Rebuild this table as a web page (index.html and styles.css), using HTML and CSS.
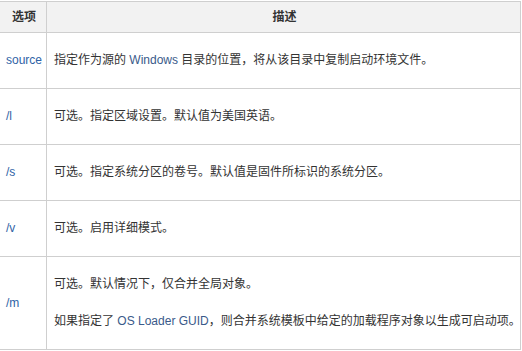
FILE: index.html
```html
<!DOCTYPE html>
<html lang="zh-CN">
<head>
<meta charset="utf-8">
<title>选项</title>
<link rel="stylesheet" href="styles.css">
</head>
<body>
<div class="page">
<table class="tbl">
  <thead>
    <tr><th class="c-opt">选项</th><th class="c-desc">描述</th></tr>
  </thead>
  <tbody>
    <tr><td class="opt">source</td><td class="desc">指定作为源的 <span class="lat">Windows</span> 目录的位置，将从该目录中复制启动环境文件。</td></tr>
    <tr><td class="opt">/l</td><td class="desc">可选。指定区域设置。默认值为美国英语。</td></tr>
    <tr><td class="opt">/s</td><td class="desc">可选。指定系统分区的卷号。默认值是固件所标识的系统分区。</td></tr>
    <tr><td class="opt">/v</td><td class="desc">可选。启用详细模式。</td></tr>
    <tr><td class="opt">/m</td><td class="desc"><p class="para">可选。默认情况下，仅合并全局对象。</p><p class="para">如果指定了 <span class="lat">OS Loader GUID</span>，则合并系统模板中给定的加载程序对象以生成可启动项。</p></td></tr>
  </tbody>
</table>
</div>
</body>
</html>
```
FILE: styles.css
```css
html, body {
  margin: 0;
  padding: 0;
  background: #fff;
}
.page {
  padding-top: 1px;
}
.tbl {
  border-collapse: collapse;
  width: 521px;
  font-family: "Liberation Sans", "Noto Sans CJK SC", sans-serif;
  font-size: 12px;
  color: #333;
  table-layout: fixed;
}
.c-opt { width: 36px; }
.tbl th, .tbl td {
  border: 1px solid #cfcfcf;
  text-align: left;
  vertical-align: middle;
}
.tbl th:first-child, .tbl td:first-child {
  border-left: 0;
}
.tbl th {
  background: #f2f2f2;
  font-weight: bold;
  text-align: center;
  height: 30px;
  padding: 0 4px 0 6px;
  line-height: 18px;
  color: #333;
}
.tbl td {
  padding: 18px 4px 18px 6px;
  line-height: 19px;
}
.tbl td.desc {
  padding-left: 7px;
  white-space: nowrap;
}
.opt {
  color: #2f63a6;
}
.lat {
  color: #3a5a8a;
}
.para {
  margin: 0;
}
.para + .para {
  margin-top: 18px;
}
```
